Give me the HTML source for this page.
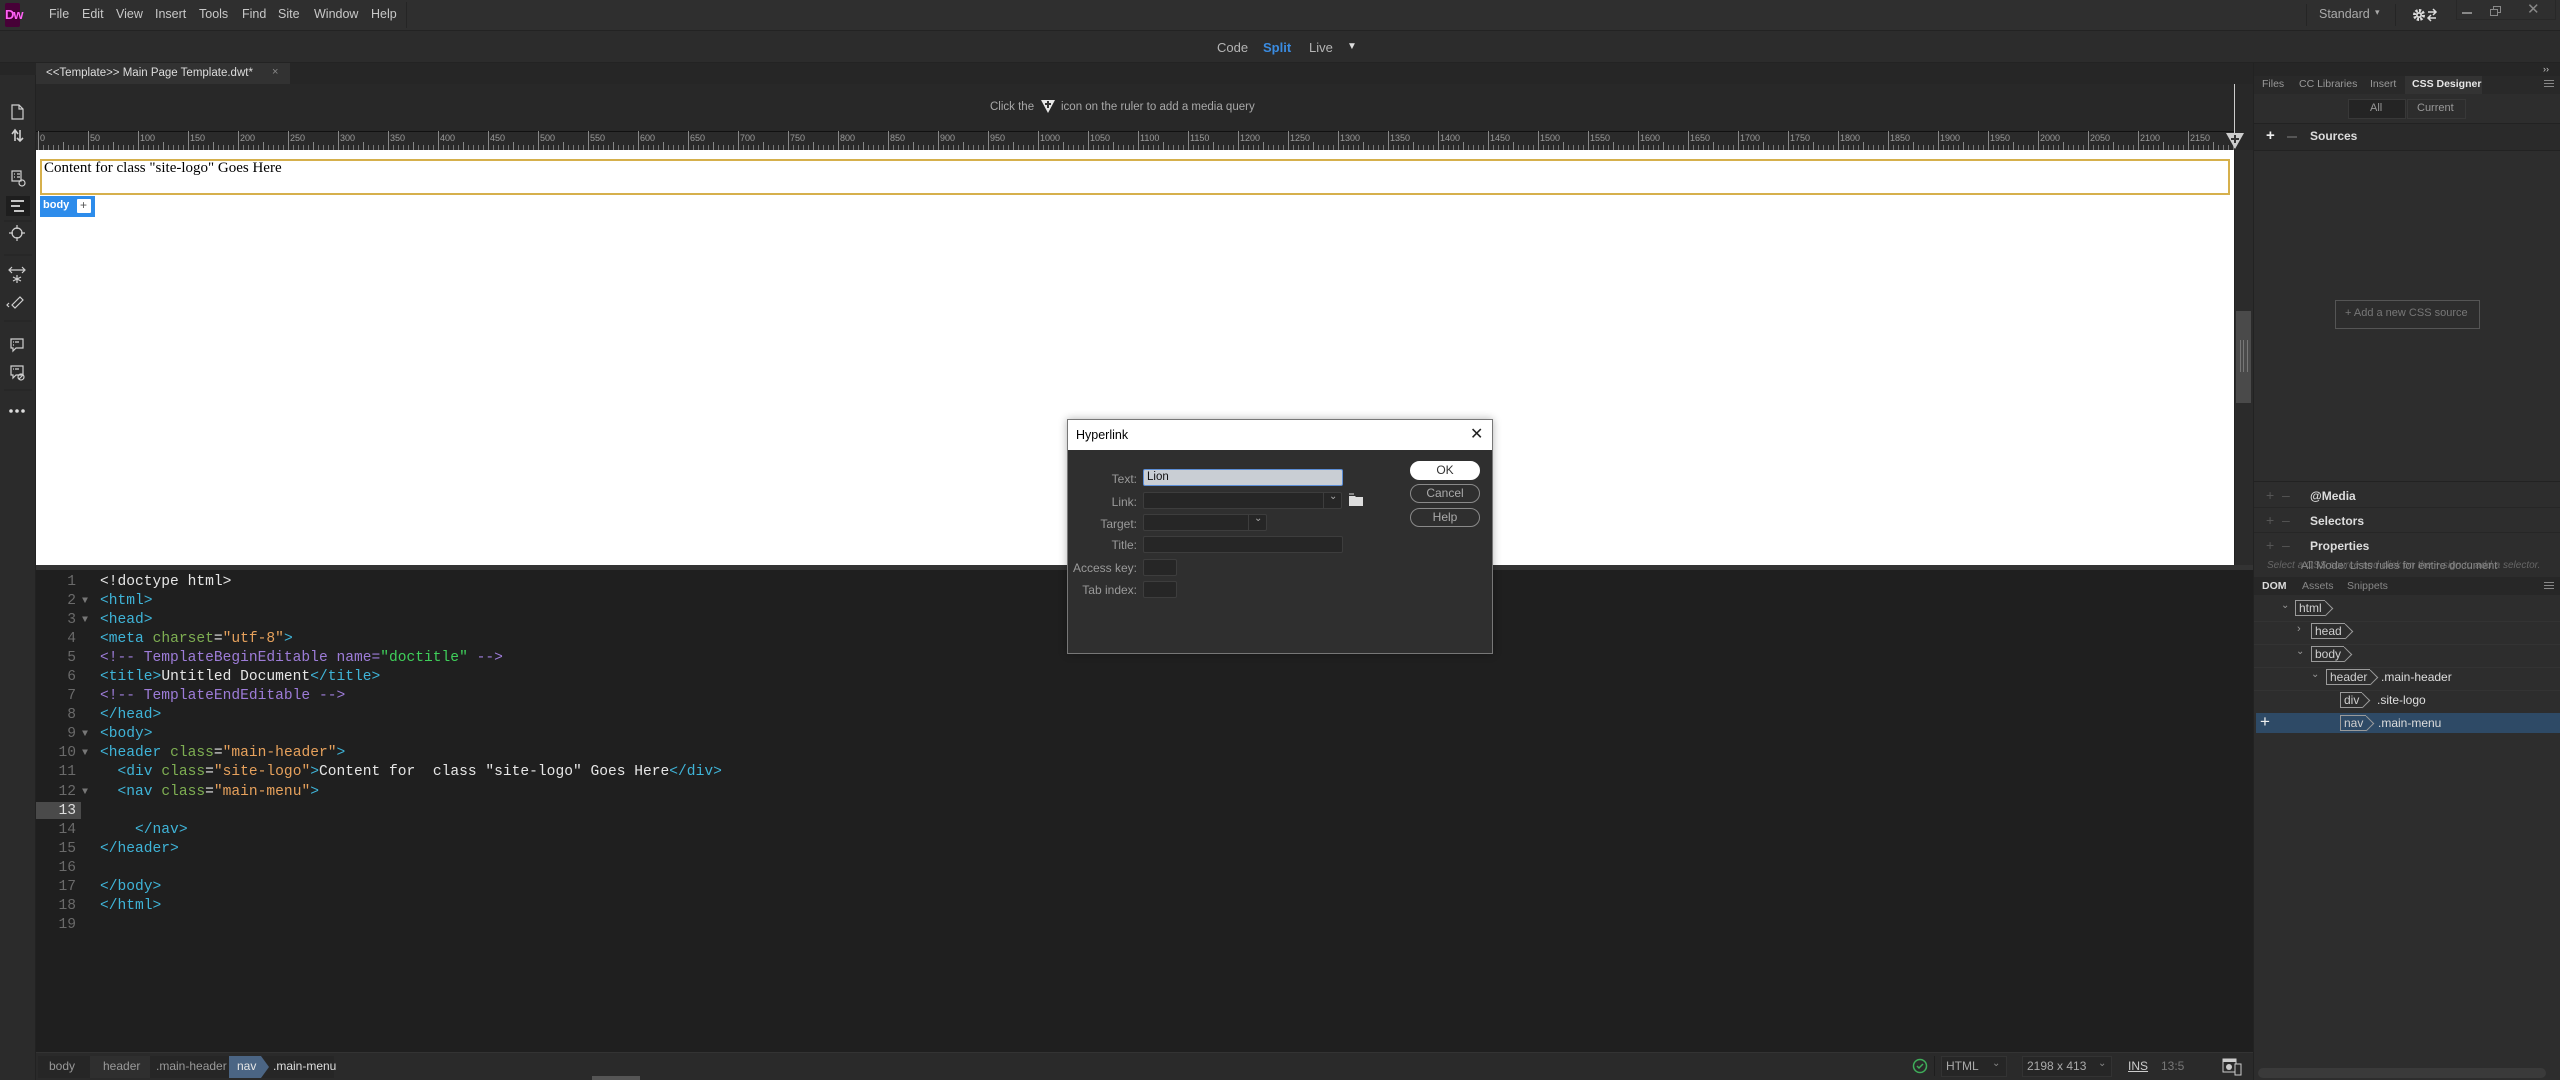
<!DOCTYPE html>
<html><head><meta charset="utf-8">
<style>
*{margin:0;padding:0;box-sizing:border-box}
body{width:2560px;height:1080px;background:#2b2b2b;position:relative;overflow:hidden;font-family:"Liberation Sans",sans-serif;color:#c8c8c8;font-size:12px}
.a{position:absolute}
.t{position:absolute;white-space:nowrap}
.code{font-family:"Liberation Mono",monospace;font-size:14.6px;line-height:19.06px}
.code>div{height:19.06px;white-space:pre}
.tg{color:#3fb4d8}.at{color:#7eae52}.vl{color:#e6a15c}.cm{color:#9d7cd8}.gr{color:#3fcf5a}.tx{color:#e6e6e6}
.ln{color:#6a6a6a;text-align:right;width:40px}
.inp{position:absolute;background:#262626;border:1px solid #3d3d3d;border-radius:2px}
.lbl{position:absolute;color:#9a9a9a;font-size:12px;text-align:right;width:100px}
.btn{position:absolute;border:1px solid #8a8a8a;border-radius:10px;color:#aaa;text-align:center;font-size:12px;line-height:17px}
.dtag{position:absolute;border:1px solid #9a9a9a;border-right:none;color:#cfcfcf;font-size:12px;line-height:14px;padding:0 3px;height:16px}
.dtag:after{content:"";position:absolute;right:-6px;top:2px;width:10px;height:10px;border-top:1px solid #9a9a9a;border-right:1px solid #9a9a9a;transform:rotate(45deg)}
</style></head><body>

<!-- menu bar -->
<div class="a" style="left:0;top:0;width:2560px;height:30px;background:#2f2f2f"></div>
<div class="a" style="left:5px;top:3px;width:15px;height:24px;background:#470137;border-radius:2px"></div>
<div class="t" style="left:5px;top:7px;font-size:13px;font-weight:bold;color:#ff61f6;letter-spacing:-1px">Dw</div>
<div class="t" style="left:49px;top:7px;font-size:12.5px;color:#c8c8c8">File</div>
<div class="t" style="left:82px;top:7px;font-size:12.5px">Edit</div>
<div class="t" style="left:116px;top:7px;font-size:12.5px">View</div>
<div class="t" style="left:155px;top:7px;font-size:12.5px">Insert</div>
<div class="t" style="left:199px;top:7px;font-size:12.5px">Tools</div>
<div class="t" style="left:242px;top:7px;font-size:12.5px">Find</div>
<div class="t" style="left:278px;top:7px;font-size:12.5px">Site</div>
<div class="t" style="left:314px;top:7px;font-size:12.5px">Window</div>
<div class="t" style="left:371px;top:7px;font-size:12.5px">Help</div>
<div class="a" style="left:406px;top:2px;width:1px;height:26px;background:#252525"></div>
<div class="a" style="left:2306px;top:4px;width:1px;height:22px;background:#252525"></div>
<div class="t" style="left:2319px;top:7px;font-size:12.5px;color:#aaa">Standard</div>
<div class="t" style="left:2375px;top:7px;font-size:9px;color:#aaa">▾</div>
<div class="a" style="left:2395px;top:4px;width:1px;height:22px;background:#252525"></div>
<svg class="a" style="left:2412px;top:7px" width="28" height="16"><circle cx="7" cy="8" r="4.5" fill="none" stroke="#ddd" stroke-width="3" stroke-dasharray="2.2 1.3"/><circle cx="7" cy="8" r="3" fill="#ddd"/><circle cx="7" cy="8" r="1.3" fill="#2f2f2f"/><path d="M16 5h8M21 2l3 3-3 3M24 11h-8M19 8l-3 3 3 3" stroke="#ddd" stroke-width="1.5" fill="none"/></svg>
<div class="a" style="left:2456px;top:0;width:100px;height:20px;border:1px solid #282828;border-top:none"></div>
<div class="a" style="left:2462px;top:12px;width:10px;height:2px;background:#888"></div>
<div class="a" style="left:2493px;top:6px;width:8px;height:7px;border:1px solid #888"></div>
<div class="a" style="left:2490px;top:9px;width:8px;height:7px;border:1px solid #888;background:#2f2f2f"></div>
<div class="t" style="left:2527px;top:0px;font-size:15px;color:#888">✕</div>

<!-- view switch bar -->
<div class="a" style="left:0;top:30px;width:2560px;height:33px;background:#2c2c2c;border-top:1px solid #232323;border-bottom:1px solid #232323"></div>
<div class="t" style="left:1217px;top:40px;font-size:13px;color:#b5b5b5">Code</div>
<div class="t" style="left:1263px;top:40px;font-size:13px;color:#3a8be0;font-weight:bold">Split</div>
<div class="t" style="left:1309px;top:40px;font-size:13px;color:#b5b5b5">Live</div>
<div class="t" style="left:1347px;top:41px;font-size:10px;color:#ddd">▼</div>

<!-- tab bar -->
<div class="a" style="left:0;top:63px;width:2253px;height:21px;background:#262626"></div>
<div class="a" style="left:36px;top:63px;width:254px;height:21px;background:#323232"></div>
<div class="t" style="left:46px;top:67px;font-size:11.5px;color:#ddd">&lt;&lt;Template&gt;&gt; Main Page Template.dwt*</div>
<div class="t" style="left:272px;top:66px;font-size:11px;color:#888">×</div>

<!-- left toolbar -->
<div class="a" style="left:0;top:75px;width:36px;height:1005px;background:#2b2b2b;border-right:1px solid #222"></div>
<svg class="a" style="left:0;top:95px" width="36" height="330">
 <g stroke="#cfcfcf" stroke-width="1.2" fill="none">
  <path d="M12 10h7l4 4v10h-11z M19 10v4h4"/>
  <path d="M12 39l3-4 3 4M15 35v11 M20 35v11M17 43l3 3 3-3" stroke-width="1.6"/>
  <path d="M12 76h9v10h-9z M14 79h1M17 79h3M14 82h1M17 82h3"/>
  <circle cx="22" cy="88" r="3"/>
 </g>
 <rect x="6" y="101" width="24" height="20" fill="#1e1e1e"/>
 <path d="M11 106h13M11 111h9M14 116h10" stroke="#ddd" stroke-width="1.8"/>
 <g stroke="#cfcfcf" stroke-width="1.2" fill="none">
  <circle cx="17" cy="138" r="5"/><path d="M17 130v4M17 142v4M9 138h4M21 138h4"/>
  <path d="M10 175h14M12 172l-3 3 3 3M22 172l3 3-3 3M17 180v8M13 182l8 4M21 182l-8 4"/>
  <path d="M12 210l8-8 3 3-8 8z M9 208l-2 2 2 2"/>
  <path d="M11 244h12v9h-7l-3 3v-3h-2z M13 247h1M15 247h4M13 250h1"/>
  <path d="M11 271h12v9h-7l-3 3v-3h-2z M13 274h1M15 274h4"/><circle cx="21" cy="282" r="3"/><path d="M19 284l4-4"/>
 </g>
 <circle cx="11" cy="316" r="1.8" fill="#ddd"/><circle cx="17" cy="316" r="1.8" fill="#ddd"/><circle cx="23" cy="316" r="1.8" fill="#ddd"/>
 <path d="M4 126h28M4 160h28M4 226h28M4 295h28" stroke="#232323"/>
</svg>

<!-- media query bar -->
<div class="a" style="left:36px;top:84px;width:2198px;height:47px;background:#282828"></div>
<div class="t" style="left:990px;top:101px;font-size:11.5px;color:#a8a8a8">Click the</div>
<svg class="a" style="left:1040px;top:98px" width="16" height="16"><path d="M1 2h14l-7 13z" fill="#e8e8e8"/><path d="M8 3v7M5 6h6" stroke="#333" stroke-width="2"/></svg>
<div class="t" style="left:1061px;top:101px;font-size:11.5px;color:#a8a8a8">icon on the ruler to add a media query</div>

<!-- ruler -->
<svg class="a" style="left:36px;top:131px" width="2198" height="19">
 <defs><pattern id="rp" x="2" y="0" width="50" height="19" patternUnits="userSpaceOnUse">
  <path d="M0.5 0v19" stroke="#888"/>
  <path d="M5.5 14v5M10.5 14v5M15.5 14v5M20.5 14v5M30.5 14v5M35.5 14v5M40.5 14v5M45.5 14v5" stroke="#777"/>
  <path d="M25.5 11v8" stroke="#888"/>
 </pattern></defs>
 <rect width="2198" height="19" fill="#2a2a2a"/>
 <rect width="2198" height="1" fill="#111"/>
 <rect width="2198" height="19" fill="url(#rp)"/>
 <g font-family="Liberation Sans" font-size="9" fill="#9a9a9a">
 <text x="4" y="10">0</text><text x="54" y="10">50</text><text x="104" y="10">100</text><text x="154" y="10">150</text><text x="204" y="10">200</text><text x="254" y="10">250</text><text x="304" y="10">300</text><text x="354" y="10">350</text><text x="404" y="10">400</text><text x="454" y="10">450</text><text x="504" y="10">500</text><text x="554" y="10">550</text><text x="604" y="10">600</text><text x="654" y="10">650</text><text x="704" y="10">700</text><text x="754" y="10">750</text><text x="804" y="10">800</text><text x="854" y="10">850</text><text x="904" y="10">900</text><text x="954" y="10">950</text><text x="1004" y="10">1000</text><text x="1054" y="10">1050</text><text x="1104" y="10">1100</text><text x="1154" y="10">1150</text><text x="1204" y="10">1200</text><text x="1254" y="10">1250</text><text x="1304" y="10">1300</text><text x="1354" y="10">1350</text><text x="1404" y="10">1400</text><text x="1454" y="10">1450</text><text x="1504" y="10">1500</text><text x="1554" y="10">1550</text><text x="1604" y="10">1600</text><text x="1654" y="10">1650</text><text x="1704" y="10">1700</text><text x="1754" y="10">1750</text><text x="1804" y="10">1800</text><text x="1854" y="10">1850</text><text x="1904" y="10">1900</text><text x="1954" y="10">1950</text><text x="2004" y="10">2000</text><text x="2054" y="10">2050</text><text x="2104" y="10">2100</text><text x="2154" y="10">2150</text>
 </g>
</svg>
<div class="a" style="left:2234px;top:84px;width:19px;height:66px;background:#282828"></div>
<div class="a" style="left:2234px;top:84px;width:1px;height:64px;background:#ccc"></div>
<svg class="a" style="left:2225px;top:132px" width="20" height="18"><path d="M1 1h18l-9 16z" fill="#ccc"/><path d="M10 3v8M6 7h8" stroke="#333" stroke-width="2"/></svg>

<!-- design view -->
<div class="a" style="left:36px;top:150px;width:2198px;height:415px;background:#fff"></div>
<div class="a" style="left:40px;top:159px;width:2190px;height:36px;border:2px solid #d6b04c"></div>
<div class="t" style="left:44px;top:160px;font-family:'Liberation Serif',serif;font-size:15px;color:#000">Content for class "site-logo" Goes Here</div>
<div class="a" style="left:40px;top:196px;width:55px;height:21px;background:#2d8ceb"></div>
<div class="t" style="left:43px;top:199px;font-size:11px;font-weight:bold;color:#fff">body</div>
<div class="a" style="left:77px;top:199px;width:14px;height:14px;background:#fff;border-radius:1px"></div>
<div class="t" style="left:80px;top:198px;font-size:12px;color:#555">+</div>
<!-- design scrollbar -->
<div class="a" style="left:2234px;top:150px;width:19px;height:415px;background:#2b2b2b;border-left:1px solid #222"></div>
<div class="a" style="left:2236px;top:311px;width:15px;height:92px;background:#4a4a4a"></div>
<div class="a" style="left:2240px;top:340px;width:8px;height:32px;border-left:1px solid #777;border-right:1px solid #777"></div>
<div class="a" style="left:2243px;top:340px;width:1px;height:32px;background:#777"></div>

<!-- splitter -->
<div class="a" style="left:36px;top:565px;width:2217px;height:5px;background:#333"></div>

<!-- code view -->
<div class="a" style="left:36px;top:570px;width:2217px;height:482px;background:#1f1f1f"></div>
<div class="a" style="left:36px;top:802px;width:45px;height:17px;background:#4a4a4a"></div>
<div class="a code" style="left:36px;top:573px">
<div class="ln">1</div><div class="ln">2</div><div class="ln">3</div><div class="ln">4</div><div class="ln">5</div><div class="ln">6</div><div class="ln">7</div><div class="ln">8</div><div class="ln">9</div><div class="ln">10</div><div class="ln">11</div><div class="ln">12</div><div class="ln" style="color:#ddd">13</div><div class="ln">14</div><div class="ln">15</div><div class="ln">16</div><div class="ln">17</div><div class="ln">18</div><div class="ln">19</div>
</div>
<div class="a code" style="left:82px;top:573px;color:#777;font-size:10px">
<div> </div><div>▼</div><div>▼</div><div> </div><div> </div><div> </div><div> </div><div> </div><div>▼</div><div>▼</div><div> </div><div>▼</div>
</div>
<div class="a code" style="left:100px;top:573px">
<div class="tx">&lt;!doctype html&gt;</div>
<div class="tg">&lt;html&gt;</div>
<div class="tg">&lt;head&gt;</div>
<div><span class="tg">&lt;meta</span> <span class="at">charset</span><span class="tx">=</span><span class="vl">"utf-8"</span><span class="tg">&gt;</span></div>
<div class="cm">&lt;!-- TemplateBeginEditable name=<span class="gr">"doctitle"</span> --&gt;</div>
<div><span class="tg">&lt;title&gt;</span><span class="tx">Untitled Document</span><span class="tg">&lt;/title&gt;</span></div>
<div class="cm">&lt;!-- TemplateEndEditable --&gt;</div>
<div class="tg">&lt;/head&gt;</div>
<div class="tg">&lt;body&gt;</div>
<div><span class="tg">&lt;header</span> <span class="at">class</span><span class="tx">=</span><span class="vl">"main-header"</span><span class="tg">&gt;</span></div>
<div>  <span class="tg">&lt;div</span> <span class="at">class</span><span class="tx">=</span><span class="vl">"site-logo"</span><span class="tg">&gt;</span><span class="tx">Content for  class "site-logo" Goes Here</span><span class="tg">&lt;/div&gt;</span></div>
<div>  <span class="tg">&lt;nav</span> <span class="at">class</span><span class="tx">=</span><span class="vl">"main-menu"</span><span class="tg">&gt;</span></div>
<div> </div>
<div class="tg">    &lt;/nav&gt;</div>
<div class="tg">&lt;/header&gt;</div>
<div> </div>
<div class="tg">&lt;/body&gt;</div>
<div class="tg">&lt;/html&gt;</div>
<div> </div>
</div>

<!-- status bar -->
<div class="a" style="left:36px;top:1052px;width:2217px;height:28px;background:#2a2a2a;border-top:1px solid #333"></div>
<div class="a" style="left:38px;top:1056px;width:296px;height:22px;background:#262626"></div>
<div class="t" style="left:49px;top:1059px;font-size:12px;color:#999">body</div>
<div class="a" style="left:90px;top:1056px;width:60px;height:22px;background:#2f2f2f"></div>
<div class="t" style="left:103px;top:1059px;font-size:12px;color:#999">header</div>
<div class="t" style="left:156px;top:1059px;font-size:12px;color:#999">.main-header</div>
<div class="a" style="left:229px;top:1056px;width:40px;height:22px;background:#4b6584;clip-path:polygon(0 0,80% 0,100% 50%,80% 100%,0 100%)"></div>
<div class="t" style="left:237px;top:1059px;font-size:12px;color:#e6e6e6">nav</div>
<div class="t" style="left:273px;top:1059px;font-size:12px;color:#ddd">.main-menu</div>
<div class="a" style="left:592px;top:1076px;width:48px;height:4px;background:#555"></div>
<svg class="a" style="left:1912px;top:1058px" width="16" height="16"><circle cx="8" cy="8" r="6.5" fill="none" stroke="#3fae5a" stroke-width="1.5"/><path d="M5 8l2 2 4-4" stroke="#3fae5a" stroke-width="1.5" fill="none"/></svg>
<div class="a" style="left:1934px;top:1056px;width:1px;height:20px;background:#1e1e1e"></div>
<div class="a" style="left:1941px;top:1056px;width:66px;height:21px;background:#262626;border:1px solid #333"></div>
<div class="t" style="left:1946px;top:1059px;font-size:12px;color:#aaa">HTML</div>
<div class="t" style="left:1992px;top:1058px;font-size:10px;color:#888">⌄</div>
<div class="a" style="left:2022px;top:1056px;width:90px;height:21px;background:#262626;border:1px solid #333"></div>
<div class="t" style="left:2027px;top:1059px;font-size:12px;color:#aaa">2198 x 413</div>
<div class="t" style="left:2098px;top:1058px;font-size:10px;color:#888">⌄</div>
<div class="t" style="left:2128px;top:1059px;font-size:12px;color:#ccc;text-decoration:underline">INS</div>
<div class="t" style="left:2161px;top:1059px;font-size:12px;color:#777">13:5</div>
<svg class="a" style="left:2222px;top:1058px" width="20" height="18"><rect x="1" y="1" width="13" height="13" fill="none" stroke="#ccc"/><rect x="1" y="1" width="13" height="3" fill="#ccc"/><circle cx="7" cy="9" r="3" fill="#ccc"/><rect x="13" y="6" width="6" height="11" fill="#2a2a2a" stroke="#ccc"/></svg>

<!-- right panel -->
<div class="a" style="left:2253px;top:63px;width:307px;height:1017px;background:#2d2d2d;border-left:1px solid #222"></div>
<div class="a" style="left:2254px;top:63px;width:306px;height:13px;background:#262626"></div>
<div class="t" style="left:2543px;top:64px;font-size:9px;color:#ccc">››</div>
<div class="a" style="left:2254px;top:76px;width:306px;height:18px;background:#292929"></div>
<div class="t" style="left:2262px;top:78px;font-size:10.5px;color:#999">Files</div>
<div class="t" style="left:2299px;top:78px;font-size:10.5px;color:#999">CC Libraries</div>
<div class="t" style="left:2370px;top:78px;font-size:10.5px;color:#999">Insert</div>
<div class="a" style="left:2405px;top:76px;width:77px;height:18px;background:#333"></div>
<div class="t" style="left:2412px;top:78px;font-size:10.5px;color:#e6e6e6;font-weight:bold">CSS Designer</div>
<div class="a" style="left:2544px;top:80px;width:10px;height:7px;border-top:1px solid #888;border-bottom:1px solid #888"></div>
<div class="a" style="left:2544px;top:83px;width:10px;height:1px;background:#888"></div>
<div class="a" style="left:2348px;top:99px;width:58px;height:20px;background:#242424;border:1px solid #383838"></div>
<div class="t" style="left:2370px;top:102px;font-size:11px;color:#999">All</div>
<div class="a" style="left:2407px;top:99px;width:59px;height:20px;background:#2d2d2d;border:1px solid #383838"></div>
<div class="t" style="left:2417px;top:102px;font-size:11px;color:#999">Current</div>
<div class="a" style="left:2254px;top:123px;width:306px;height:28px;background:#2a2a2a;border-top:1px solid #222;border-bottom:1px solid #222"></div>
<div class="t" style="left:2266px;top:127px;font-size:15px;color:#eee;font-weight:bold">+</div>
<div class="a" style="left:2287px;top:136px;width:10px;height:2px;background:#555"></div>
<div class="t" style="left:2310px;top:129px;font-size:12px;color:#ddd;font-weight:bold">Sources</div>
<div class="a" style="left:2335px;top:300px;width:145px;height:29px;border:1px solid #555"></div>
<div class="t" style="left:2345px;top:307px;font-size:11px;color:#777">+ Add a new CSS source</div>
<div class="a" style="left:2254px;top:481px;width:306px;height:1px;background:#222"></div>
<div class="a" style="left:2254px;top:507px;width:306px;height:1px;background:#262626"></div>
<div class="a" style="left:2254px;top:532px;width:306px;height:1px;background:#262626"></div>
<div class="t" style="left:2266px;top:487px;font-size:14px;color:#555">+ &nbsp;–</div>
<div class="t" style="left:2310px;top:489px;font-size:12px;color:#ddd;font-weight:bold">@Media</div>
<div class="t" style="left:2266px;top:512px;font-size:14px;color:#555">+ &nbsp;–</div>
<div class="t" style="left:2310px;top:514px;font-size:12px;color:#ddd;font-weight:bold">Selectors</div>
<div class="t" style="left:2266px;top:537px;font-size:14px;color:#555">+ &nbsp;–</div>
<div class="t" style="left:2310px;top:539px;font-size:12px;color:#ddd;font-weight:bold">Properties</div>
<div class="t" style="left:2267px;top:560px;font-size:10px;color:#666;font-style:italic">Select a CSS source and click on the + sign to add a selector.</div>
<div class="t" style="left:2301px;top:560px;font-size:11px;color:#888">All Mode: Lists rules for entire document</div>
<div class="a" style="left:2254px;top:577px;width:306px;height:18px;background:#272727"></div>
<div class="t" style="left:2262px;top:580px;font-size:10.5px;color:#ddd;font-weight:bold">DOM</div>
<div class="t" style="left:2302px;top:580px;font-size:10.5px;color:#888">Assets</div>
<div class="t" style="left:2347px;top:580px;font-size:10.5px;color:#888">Snippets</div>
<div class="a" style="left:2544px;top:582px;width:10px;height:7px;border-top:1px solid #888;border-bottom:1px solid #888"></div>
<div class="a" style="left:2544px;top:585px;width:10px;height:1px;background:#888"></div>
<div class="a" style="left:2254px;top:621px;width:306px;height:1px;background:#333"></div>
<div class="a" style="left:2254px;top:644px;width:306px;height:1px;background:#333"></div>
<div class="a" style="left:2254px;top:667px;width:306px;height:1px;background:#333"></div>
<div class="a" style="left:2254px;top:690px;width:306px;height:1px;background:#333"></div>
<div class="a" style="left:2256px;top:713px;width:304px;height:20px;background:#2e4a66"></div>
<div class="t" style="left:2281px;top:600px;font-size:10px;color:#999">⌄</div>
<div class="dtag" style="left:2295px;top:600px">html</div>
<div class="t" style="left:2297px;top:623px;font-size:11px;color:#999">›</div>
<div class="dtag" style="left:2311px;top:623px">head</div>
<div class="t" style="left:2296px;top:646px;font-size:10px;color:#999">⌄</div>
<div class="dtag" style="left:2311px;top:646px">body</div>
<div class="t" style="left:2311px;top:669px;font-size:10px;color:#999">⌄</div>
<div class="dtag" style="left:2326px;top:669px">header</div>
<div class="t" style="left:2381px;top:670px;font-size:12px;color:#ddd">.main-header</div>
<div class="dtag" style="left:2340px;top:692px">div</div>
<div class="t" style="left:2377px;top:693px;font-size:12px;color:#ddd">.site-logo</div>
<div class="dtag" style="left:2340px;top:715px">nav</div>
<div class="t" style="left:2378px;top:716px;font-size:12px;color:#ddd">.main-menu</div>
<div class="t" style="left:2260px;top:712px;font-size:17px;color:#eee">+</div>
<div class="a" style="left:2258px;top:1068px;width:288px;height:10px;background:#3a3a3a;border-radius:5px"></div>

<!-- Hyperlink dialog -->
<div class="a" style="left:1067px;top:419px;width:426px;height:235px;background:#2f2f2f;border:1px solid #777;box-shadow:0 0 8px rgba(0,0,0,.3)"></div>
<div class="a" style="left:1068px;top:420px;width:424px;height:30px;background:#fff"></div>
<div class="t" style="left:1076px;top:428px;font-size:12.5px;color:#000">Hyperlink</div>
<div class="t" style="left:1470px;top:424px;font-size:16px;color:#222">✕</div>
<div class="lbl" style="left:1037px;top:472px">Text:</div>
<div class="inp" style="left:1143px;top:469px;width:200px;height:17px;background:#c9ced4;border:1px solid #5c8ed6"></div>
<div class="t" style="left:1147px;top:471px;font-size:11.5px;color:#111">Lion</div>
<div class="lbl" style="left:1037px;top:495px">Link:</div>
<div class="inp" style="left:1143px;top:492px;width:199px;height:17px"></div>
<div class="a" style="left:1323px;top:493px;width:1px;height:15px;background:#3d3d3d"></div>
<div class="t" style="left:1329px;top:491px;font-size:10px;color:#aaa">⌄</div>
<svg class="a" style="left:1349px;top:493px" width="16" height="14"><path d="M0 3h6l1 1h7v9h-14z" fill="#ddd"/><path d="M0 1h5" stroke="#ddd"/></svg>
<div class="lbl" style="left:1037px;top:517px">Target:</div>
<div class="inp" style="left:1143px;top:514px;width:124px;height:17px"></div>
<div class="a" style="left:1248px;top:515px;width:1px;height:15px;background:#3d3d3d"></div>
<div class="t" style="left:1254px;top:513px;font-size:10px;color:#aaa">⌄</div>
<div class="lbl" style="left:1037px;top:538px">Title:</div>
<div class="inp" style="left:1143px;top:536px;width:200px;height:17px"></div>
<div class="lbl" style="left:1037px;top:561px">Access key:</div>
<div class="inp" style="left:1143px;top:559px;width:34px;height:17px"></div>
<div class="lbl" style="left:1037px;top:583px">Tab index:</div>
<div class="inp" style="left:1143px;top:581px;width:34px;height:17px"></div>
<div class="btn" style="left:1410px;top:461px;width:70px;height:19px;background:#fff;border-color:#fff;color:#333">OK</div>
<div class="btn" style="left:1410px;top:484px;width:70px;height:19px">Cancel</div>
<div class="btn" style="left:1410px;top:508px;width:70px;height:19px">Help</div>

</body></html>
